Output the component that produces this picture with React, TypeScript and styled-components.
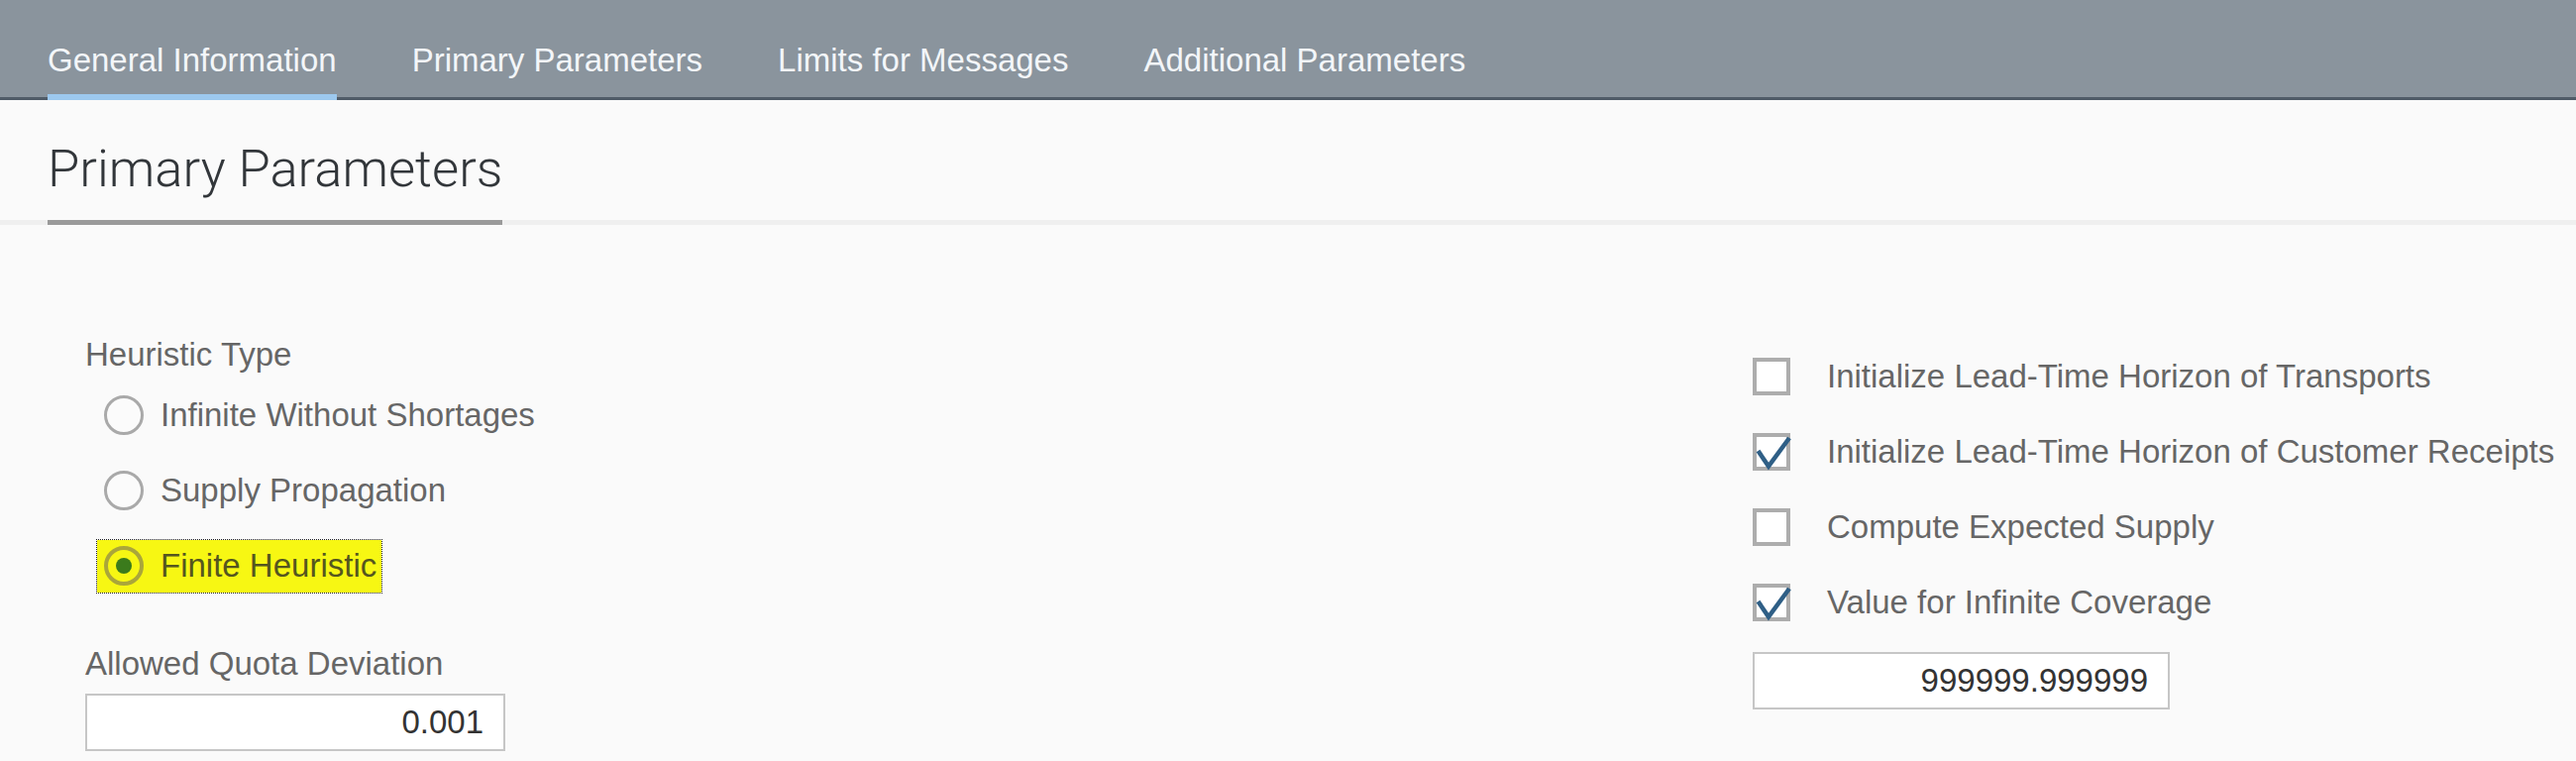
import styled, { createGlobalStyle } from "styled-components";

const GlobalStyle = createGlobalStyle`
  html, body {
    margin: 0;
    padding: 0;
    background: #fafafa;
  }
  body {
    font-family: "Liberation Sans", Arial, sans-serif;
  }
`;

const Page = styled.div`
  width: 2600px;
  height: 768px;
  overflow: hidden;
  background: #fafafa;
`;

const TabBar = styled.nav`
  display: flex;
  align-items: flex-start;
  gap: 76px;
  height: 101px;
  box-sizing: border-box;
  padding-left: 48px;
  background: #8a949d;
  border-bottom: 3px solid #4f5b67;
`;

const Tab = styled.div<{ $active?: boolean }>`
  box-sizing: border-box;
  height: 101px;
  padding-top: 44px;
  font-size: 33px;
  line-height: 33px;
  color: #f3f6f9;
  white-space: nowrap;
  border-bottom: 6px solid ${(p) => (p.$active ? "#9cc8ee" : "transparent")};
`;

const Header = styled.header`
  display: flex;
  align-items: flex-start;
  padding: 39px 0 0 48px;
  box-shadow: inset 0 -5px 0 #efefef;
`;

const Title = styled.h1`
  margin: 0;
  padding-bottom: 22px;
  font-family: Roboto, "Liberation Sans", sans-serif;
  font-weight: 300;
  font-size: 52.5px;
  line-height: 60px;
  color: #32363a;
  border-bottom: 5px solid #9a9a9a;
`;

const Form = styled.section`
  display: grid;
  grid-template-columns: 1683px 1fr;
  align-items: start;
  padding-left: 86px;
`;

const Column = styled.div<{ $top: number }>`
  display: flex;
  flex-direction: column;
  align-items: flex-start;
  padding-top: ${(p) => p.$top}px;
`;

const Label = styled.div<{ $gap?: number }>`
  margin-top: ${(p) => p.$gap ?? 0}px;
  height: 40px;
  font-size: 33px;
  line-height: 40px;
  color: #666;
  white-space: nowrap;
`;

const RadioGroup = styled.div`
  display: flex;
  flex-direction: column;
  margin-top: 3px;
`;

const Row = styled.div`
  display: flex;
  align-items: center;
  height: 76px;
`;

const RadioItem = styled.label<{ $highlight?: boolean }>`
  display: inline-flex;
  align-items: center;
  gap: 17px;
  box-sizing: border-box;
  height: 53px;
  margin-left: 12px;
  padding: 0 5px 0 7px;
  font-size: 33px;
  line-height: 40px;
  white-space: nowrap;
  color: ${(p) => (p.$highlight ? "#55561f" : "#666")};
  background: ${(p) => (p.$highlight ? "#f7f713" : "transparent")};
  outline: ${(p) => (p.$highlight ? "1px dotted #222" : "none")};
`;

const RadioCircle = styled.span<{ $checked?: boolean }>`
  display: flex;
  align-items: center;
  justify-content: center;
  box-sizing: border-box;
  width: 40px;
  height: 40px;
  border-radius: 50%;
  border: ${(p) => (p.$checked ? "4px solid #aaa63a" : "3px solid #a9a9a9")};
  background: ${(p) => (p.$checked ? "transparent" : "#fbfbfb")};

  &::after {
    content: "";
    display: ${(p) => (p.$checked ? "block" : "none")};
    width: 16px;
    height: 16px;
    border-radius: 50%;
    background: #3b7b1c;
  }
`;

const CheckItem = styled.label`
  display: flex;
  align-items: center;
  gap: 37px;
  font-size: 33px;
  line-height: 40px;
  color: #666;
  white-space: nowrap;
`;

const CheckBox = styled.span`
  position: relative;
  box-sizing: border-box;
  width: 38px;
  height: 38px;
  border: 4px solid #adadad;
  background: #fff;

  svg {
    position: absolute;
    left: -4px;
    top: -4px;
    overflow: visible;
  }
`;

const ValueInput = styled.input<{ $gap: number; $width: number }>`
  box-sizing: border-box;
  width: ${(p) => p.$width}px;
  height: 58px;
  margin-top: ${(p) => p.$gap}px;
  padding: 0 20px 0 10px;
  border: 2px solid #c6c6c6;
  background: #fff;
  font-family: "Liberation Sans", Arial, sans-serif;
  font-size: 33px;
  color: #333;
  text-align: right;
  outline: none;
`;

function Check({ checked }: { checked?: boolean }) {
  return (
    <CheckBox>
      {checked && (
        <svg width="38" height="38" viewBox="0 0 38 38">
          <path d="M5.5 18 L16 33.5 L37 5" fill="none" stroke="#2f5f86" strokeWidth="4.5" />
        </svg>
      )}
    </CheckBox>
  );
}

const tabs = ["General Information", "Primary Parameters", "Limits for Messages", "Additional Parameters"];

const heuristics = [
  { text: "Infinite Without Shortages", checked: false },
  { text: "Supply Propagation", checked: false },
  { text: "Finite Heuristic", checked: true },
];

const options = [
  { text: "Initialize Lead-Time Horizon of Transports", checked: false },
  { text: "Initialize Lead-Time Horizon of Customer Receipts", checked: true },
  { text: "Compute Expected Supply", checked: false },
  { text: "Value for Infinite Coverage", checked: true },
];

export default function App() {
  return (
    <Page>
      <GlobalStyle />
      <TabBar>
        {tabs.map((t, i) => (
          <Tab key={t} $active={i === 0}>
            {t}
          </Tab>
        ))}
      </TabBar>
      <Header>
        <Title>Primary Parameters</Title>
      </Header>
      <Form>
        <Column $top={111}>
          <Label>Heuristic Type</Label>
          <RadioGroup>
            {heuristics.map((h) => (
              <Row key={h.text}>
                <RadioItem $highlight={h.checked}>
                  <RadioCircle $checked={h.checked} />
                  {h.text}
                </RadioItem>
              </Row>
            ))}
          </RadioGroup>
          <Label $gap={41}>Allowed Quota Deviation</Label>
          <ValueInput $gap={10} $width={424} readOnly value="0.001" />
        </Column>
        <Column $top={115}>
          {options.map((o) => (
            <Row key={o.text}>
              <CheckItem>
                <Check checked={o.checked} />
                {o.text}
              </CheckItem>
            </Row>
          ))}
          <ValueInput $gap={12} $width={421} readOnly value="999999.999999" />
        </Column>
      </Form>
    </Page>
  );
}
